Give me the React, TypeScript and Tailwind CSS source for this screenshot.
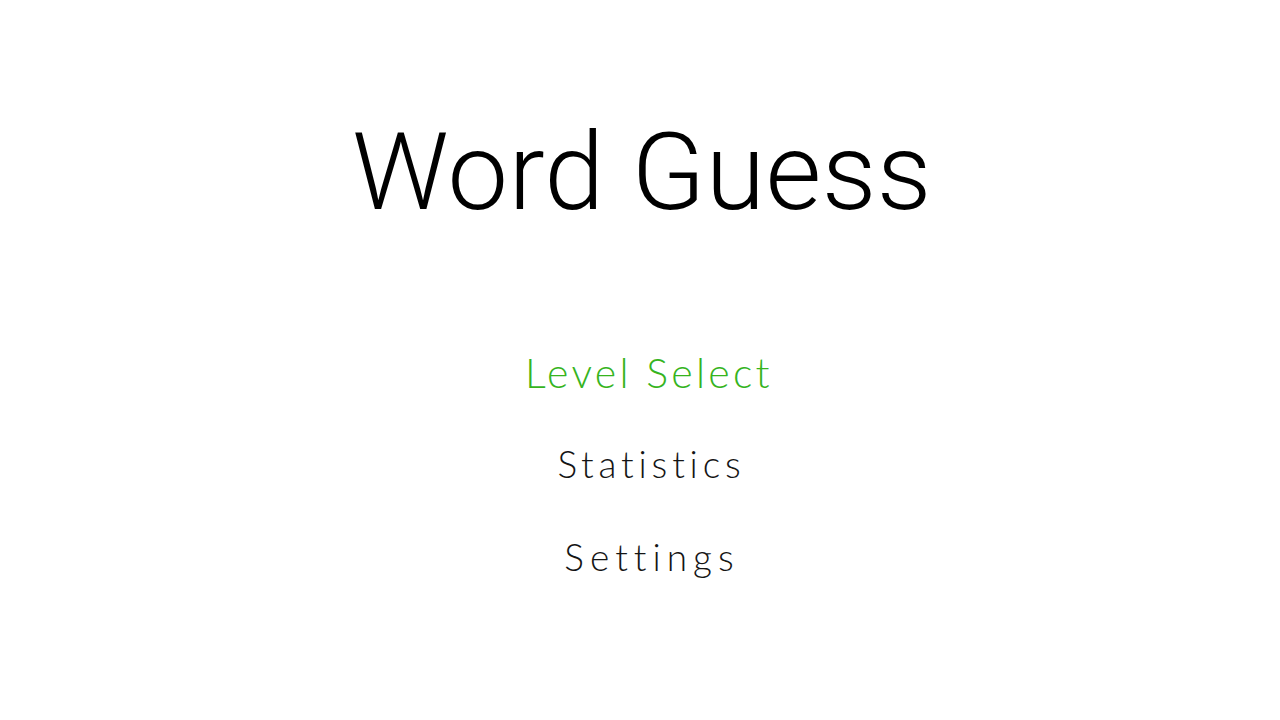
import React from "react";

export default function App() {
  return (
    <div className="w-[1280px] h-[720px] bg-white flex flex-col items-center">
      <h1
        className="mt-[118px] pl-[4px] text-[108px] leading-[108px] font-light tracking-[0.4px] text-black"
        style={{ fontFamily: "Roboto, sans-serif" }}
      >
        Word Guess
      </h1>
      <div
        className="mt-[98px] flex flex-col items-center pl-[18px]"
        style={{ fontFamily: "Lato, sans-serif" }}
      >
        <div className="h-[93px] pt-[2px] text-[41px] leading-[93px] font-light tracking-[3.3px] text-[#36b41e]">
          Level Select
        </div>
        <div className="h-[93px] pl-[4.8px] text-[37px] leading-[93px] font-light tracking-[4.8px] text-[#151515]">
          Statistics
        </div>
        <div className="h-[93px] pl-[6px] text-[37px] leading-[93px] font-light tracking-[6px] text-[#151515]">
          Settings
        </div>
      </div>
    </div>
  );
}
